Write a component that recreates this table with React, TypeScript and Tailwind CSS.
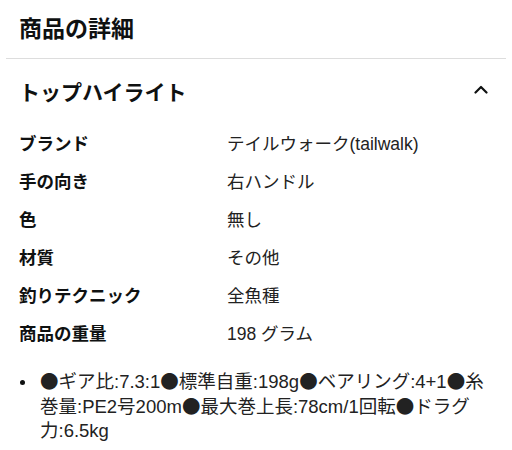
import React from 'react';

const specs: [string, string][] = [
  ['ブランド', 'テイルウォーク(tailwalk)'],
  ['手の向き', '右ハンドル'],
  ['色', '無し'],
  ['材質', 'その他'],
  ['釣りテクニック', '全魚種'],
  ['商品の重量', '198 グラム'],
];

const highlight = [
  'ギア比:7.3:1',
  '標準自重:198g',
  'ベアリング:4+1',
  '糸巻量:PE2号200m',
  '最大巻上長:78cm/1回転',
  'ドラグ力:6.5kg',
];

export default function App() {
  return (
    <div
      className="w-[512px] h-[450px] overflow-hidden bg-white text-[#0f1111]"
      style={{ fontFamily: '"Liberation Sans", "Noto Sans CJK JP", sans-serif' }}
    >
      <div className="h-[58px] flex items-center px-[19px]">
        <h2 className="text-[23px] font-bold leading-none">商品の詳細</h2>
      </div>
      <div className="mx-[6px] border-t border-[#dddddd]" />

      <div className="h-[66px] flex items-center justify-between pl-[19px] pr-[24px]">
        <h3 className="text-[21px] font-bold leading-none">トップハイライト</h3>
        <svg width="14" height="9" viewBox="0 0 14 9" fill="none" className="-mt-[5px]">
          <path d="M1.5 7.5 L7 2 L12.5 7.5" stroke="#0f1111" strokeWidth="2.2" strokeLinecap="round" strokeLinejoin="round" />
        </svg>
      </div>

      <div className="px-[19px]">
        {specs.map(([label, value]) => (
          <div key={label} className="grid grid-cols-[208px_1fr] h-[38px] items-center text-[17.5px]">
            <span className="font-bold">{label}</span>
            <span className="text-[#222]">{value}</span>
          </div>
        ))}
      </div>

      <div className="flex mt-[17px] pl-[20px] pr-[24px] text-[18.5px] leading-[24.5px] text-[#222]">
        <div className="w-[20px] shrink-0 pt-[10px]">
          <div className="w-[5px] h-[5px] rounded-full bg-[#0f1111]" />
        </div>
        <p>
          {highlight.map((item) => (
            <React.Fragment key={item}>
              <span className="leading-none" style={{ fontFamily: '"Noto Sans CJK JP", sans-serif' }}>●</span>
              {item}
            </React.Fragment>
          ))}
        </p>
      </div>
    </div>
  );
}
